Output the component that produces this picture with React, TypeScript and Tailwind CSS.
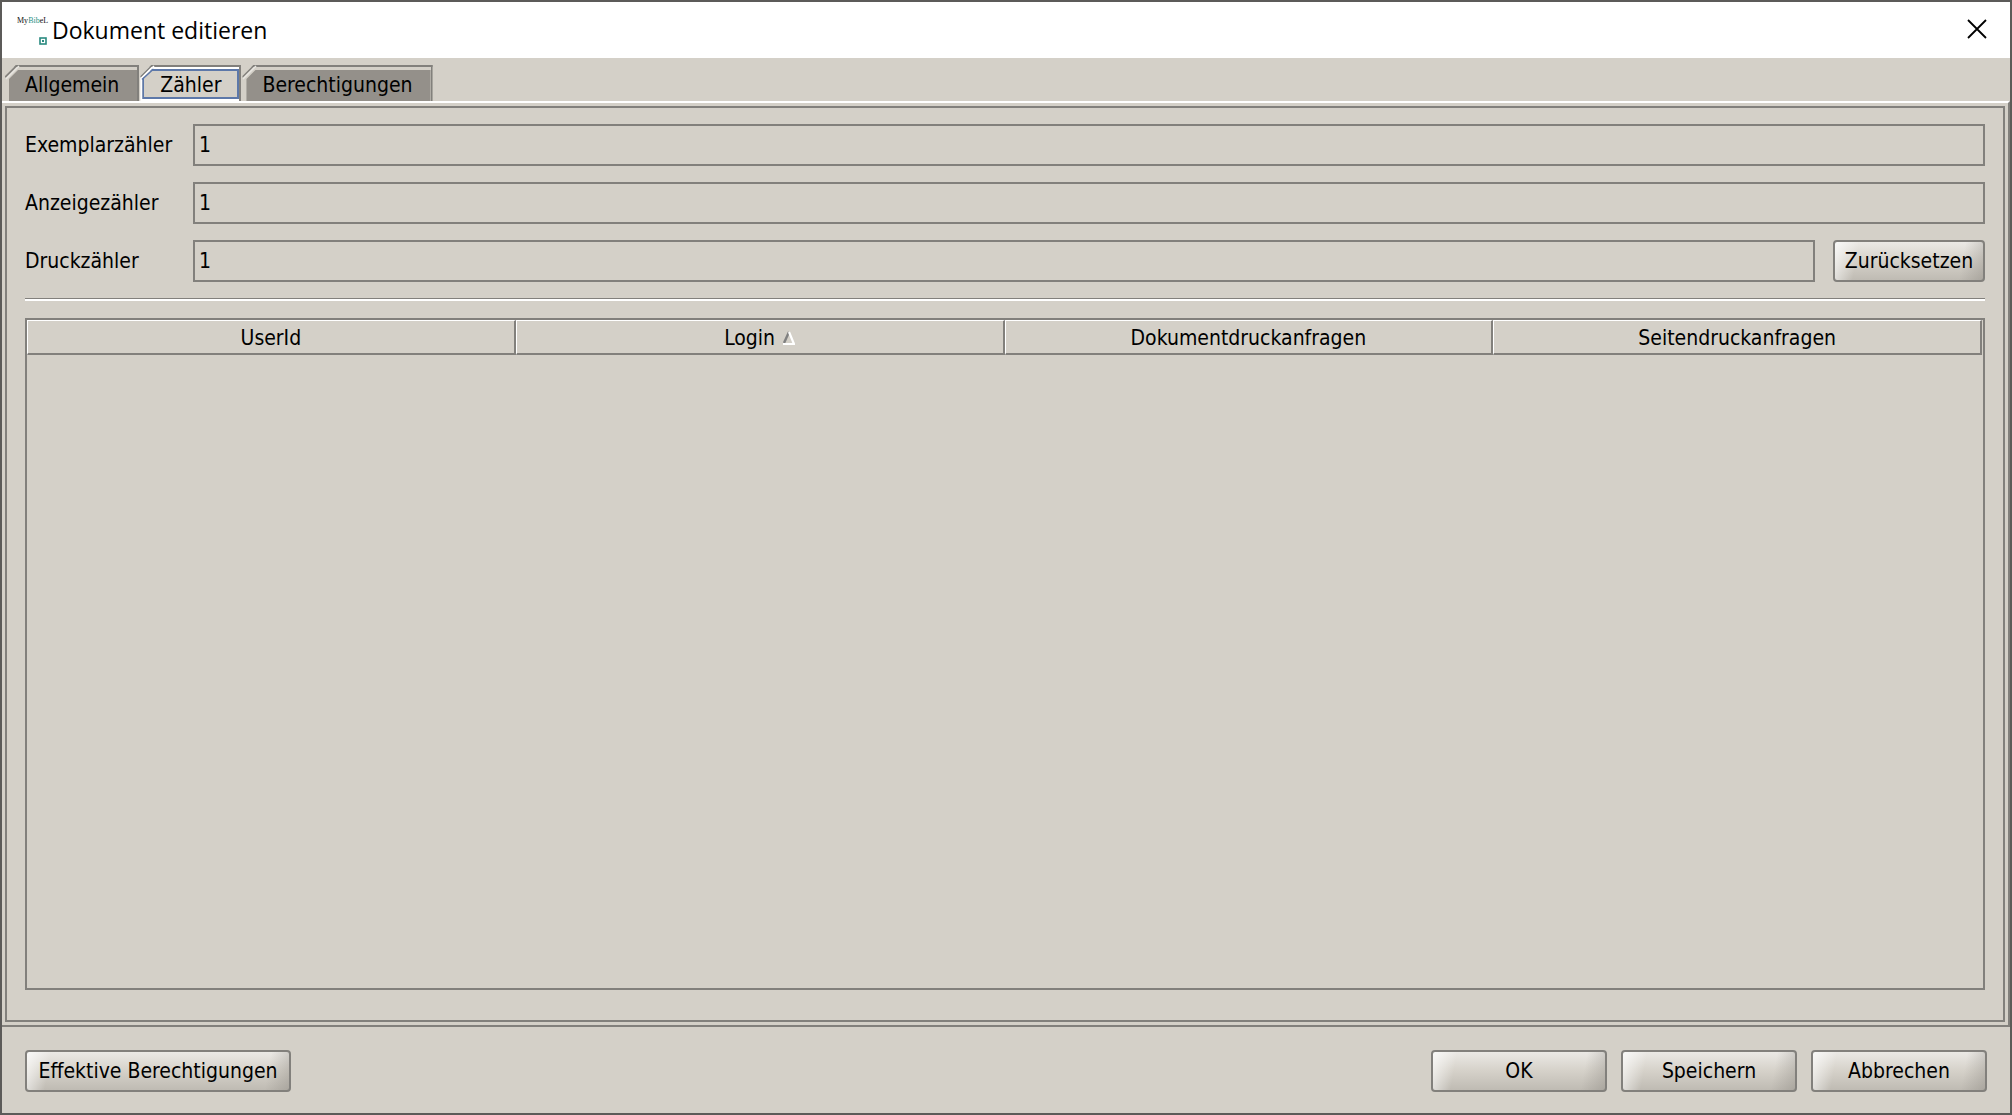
import React, { useState } from 'react';

const TABS = [
  { id: 'general', label: 'Allgemein' },
  { id: 'counter', label: 'Zähler' },
  { id: 'permissions', label: 'Berechtigungen' },
];

const COLUMNS = ['UserId', 'Login', 'Dokumentdruckanfragen', 'Seitendruckanfragen'];

const AppIcon = () => (
  <svg width="32" height="32" viewBox="0 0 32 32" aria-hidden="true">
    <text x="0" y="9" fontFamily="Liberation Serif, serif" fontSize="8" fill="#111">
      My<tspan fill="#2a9086">Bib</tspan>eL
    </text>
    <rect x="23" y="24" width="6" height="6" fill="#fff" stroke="#2a8a80" strokeWidth="1.6" />
    <rect x="25" y="26" width="2" height="2" fill="#2a8a80" />
  </svg>
);

const SortIcon = () => (
  <svg width="12" height="14" viewBox="0 0 12 14" aria-hidden="true">
    <path d="M6 1L1 12" stroke="#808080" strokeWidth="2.4" fill="none" />
    <path d="M6 1L11 13H0" stroke="#fff" strokeWidth="2.2" fill="none" />
  </svg>
);

type ButtonProps = {
  children: React.ReactNode;
  className?: string;
};

const MetalButton = ({ children, className = '' }: ButtonProps) => (
  <button
    type="button"
    className={`h-[42px] shrink-0 rounded-[4px] border-2 border-[#82807c] bg-[linear-gradient(100deg,rgba(255,255,255,0.7)_0px,rgba(255,255,255,0)_24px),linear-gradient(280deg,rgba(130,126,120,0.35)_0px,rgba(130,126,120,0)_24px),linear-gradient(to_bottom,#ebe9e5,#d5d1c9_50%,#bfbbb3)] pb-px text-center whitespace-nowrap ${className}`}
  >
    {children}
  </button>
);

type TabProps = {
  label: string;
  active: boolean;
  onSelect: () => void;
};

const Tab = ({ label, active, onSelect }: TabProps) => (
  <button
    type="button"
    role="tab"
    aria-selected={active}
    onClick={onSelect}
    className={`relative h-9 border-t-2 border-r-2 border-[#82807c] pr-[18px] pl-5 [clip-path:polygon(11px_0,100%_0,100%_100%,0_100%,0_11px)] ${active ? 'bg-white' : 'bg-[#d4d0c8]'}`}
  >
    <span
      className={`absolute right-0 [clip-path:polygon(9px_0,100%_0,100%_100%,0_100%,0_9px)] ${active ? 'top-0.5 bottom-0.5 left-0.5 border-2 border-[#5d78a9] bg-[#d4d0c8]' : 'top-[3px] bottom-0 left-1 bg-[#94908a]'}`}
    />
    <svg className="absolute -top-0.5 left-0" width="16" height="16" viewBox="0 0 16 16" aria-hidden="true">
      <path d="M0 12L12 0" stroke="#82807c" strokeWidth="2" />
      <path d="M1 14L14 1" stroke={active ? '#fff' : '#e8e6e1'} strokeWidth="1.5" />
      {active && <path d="M2 14.5L13.5 4" stroke="#5d78a9" strokeWidth="1.6" />}
    </svg>
    <span className="relative block pt-px leading-7">{label}</span>
  </button>
);

type CounterFieldProps = {
  id: string;
  label: string;
  value: string;
  children?: React.ReactNode;
};

const CounterField = ({ id, label, value, children }: CounterFieldProps) => (
  <div className="flex items-center">
    <label htmlFor={id} className="w-[168px] shrink-0 pb-px">
      {label}
    </label>
    <input
      id={id}
      type="text"
      readOnly
      defaultValue={value}
      className="h-[42px] min-w-0 flex-1 border-2 border-[#82807c] bg-transparent px-1 pb-px outline-none"
    />
    {children}
  </div>
);

export default function App() {
  const [activeTab, setActiveTab] = useState('counter');

  return (
    <div className="flex h-screen flex-col border-2 border-[#5c5b59] bg-[#d4d0c8] font-['DejaVu_Sans_Condensed','DejaVu_Sans',sans-serif] text-[21px] leading-7 text-black">
      <header className="flex h-14 shrink-0 items-center justify-between bg-white pr-[23px] pl-[15px]">
        <div className="flex items-center gap-[3px]">
          <AppIcon />
          <h1 className="font-['Open_Sans','Noto_Sans',sans-serif] text-[23px]">Dokument editieren</h1>
        </div>
        <button type="button" aria-label="Schließen" className="pb-0.5">
          <svg width="20" height="20" viewBox="0 0 20 20" aria-hidden="true">
            <path d="M1 1L19 19M19 1L1 19" stroke="#000" strokeWidth="1.8" />
          </svg>
        </button>
      </header>

      <div role="tablist" className="flex shrink-0 gap-px pt-[7px] pl-[3px]">
        {TABS.map((tab) => (
          <Tab
            key={tab.id}
            label={tab.label}
            active={tab.id === activeTab}
            onSelect={() => setActiveTab(tab.id)}
          />
        ))}
      </div>

      {/* Tab content */}
      <main className="flex min-h-0 flex-1 flex-col border-t-2 border-r-2 border-b-2 border-t-white border-r-[#82807c] border-b-[#82807c] p-[3px]">
        <div className="flex min-h-0 flex-1 flex-col border-2 border-[#82807c] px-[18px] pt-4 pb-[30px]">
          <div className="flex flex-col gap-4">
            <CounterField id="copies" label="Exemplarzähler" value="1" />
            <CounterField id="views" label="Anzeigezähler" value="1" />
            <CounterField id="prints" label="Druckzähler" value="1">
              <MetalButton className="ml-[18px] w-[152px]">Zurücksetzen</MetalButton>
            </CounterField>
          </div>

          <hr className="mt-4 h-[3px] shrink-0 border-t border-b-2 border-t-[#82807c] border-b-white" />

          <div className="mt-[17px] min-h-0 flex-1 border-2 border-[#82807c] pr-px">
            <table className="w-full table-fixed border-separate border-spacing-0">
              <thead>
                <tr>
                  {COLUMNS.map((column) => (
                    <th
                      key={column}
                      scope="col"
                      className="h-[35px] border-t border-r-2 border-b-2 border-l border-t-white border-r-[#82807c] border-b-[#82807c] border-l-white p-0 pt-0.5 font-normal"
                    >
                      <span className="inline-flex items-center gap-2">
                        {column}
                        {column === 'Login' && <SortIcon />}
                      </span>
                    </th>
                  ))}
                </tr>
              </thead>
              <tbody />
            </table>
          </div>
        </div>
      </main>

      <footer className="flex shrink-0 items-center justify-between px-[23px] pt-[23px] pb-[21px]">
        <MetalButton className="w-[266px]">Effektive Berechtigungen</MetalButton>
        <div className="flex gap-3.5">
          <MetalButton className="w-44">OK</MetalButton>
          <MetalButton className="w-44">Speichern</MetalButton>
          <MetalButton className="w-44">Abbrechen</MetalButton>
        </div>
      </footer>
    </div>
  );
}
